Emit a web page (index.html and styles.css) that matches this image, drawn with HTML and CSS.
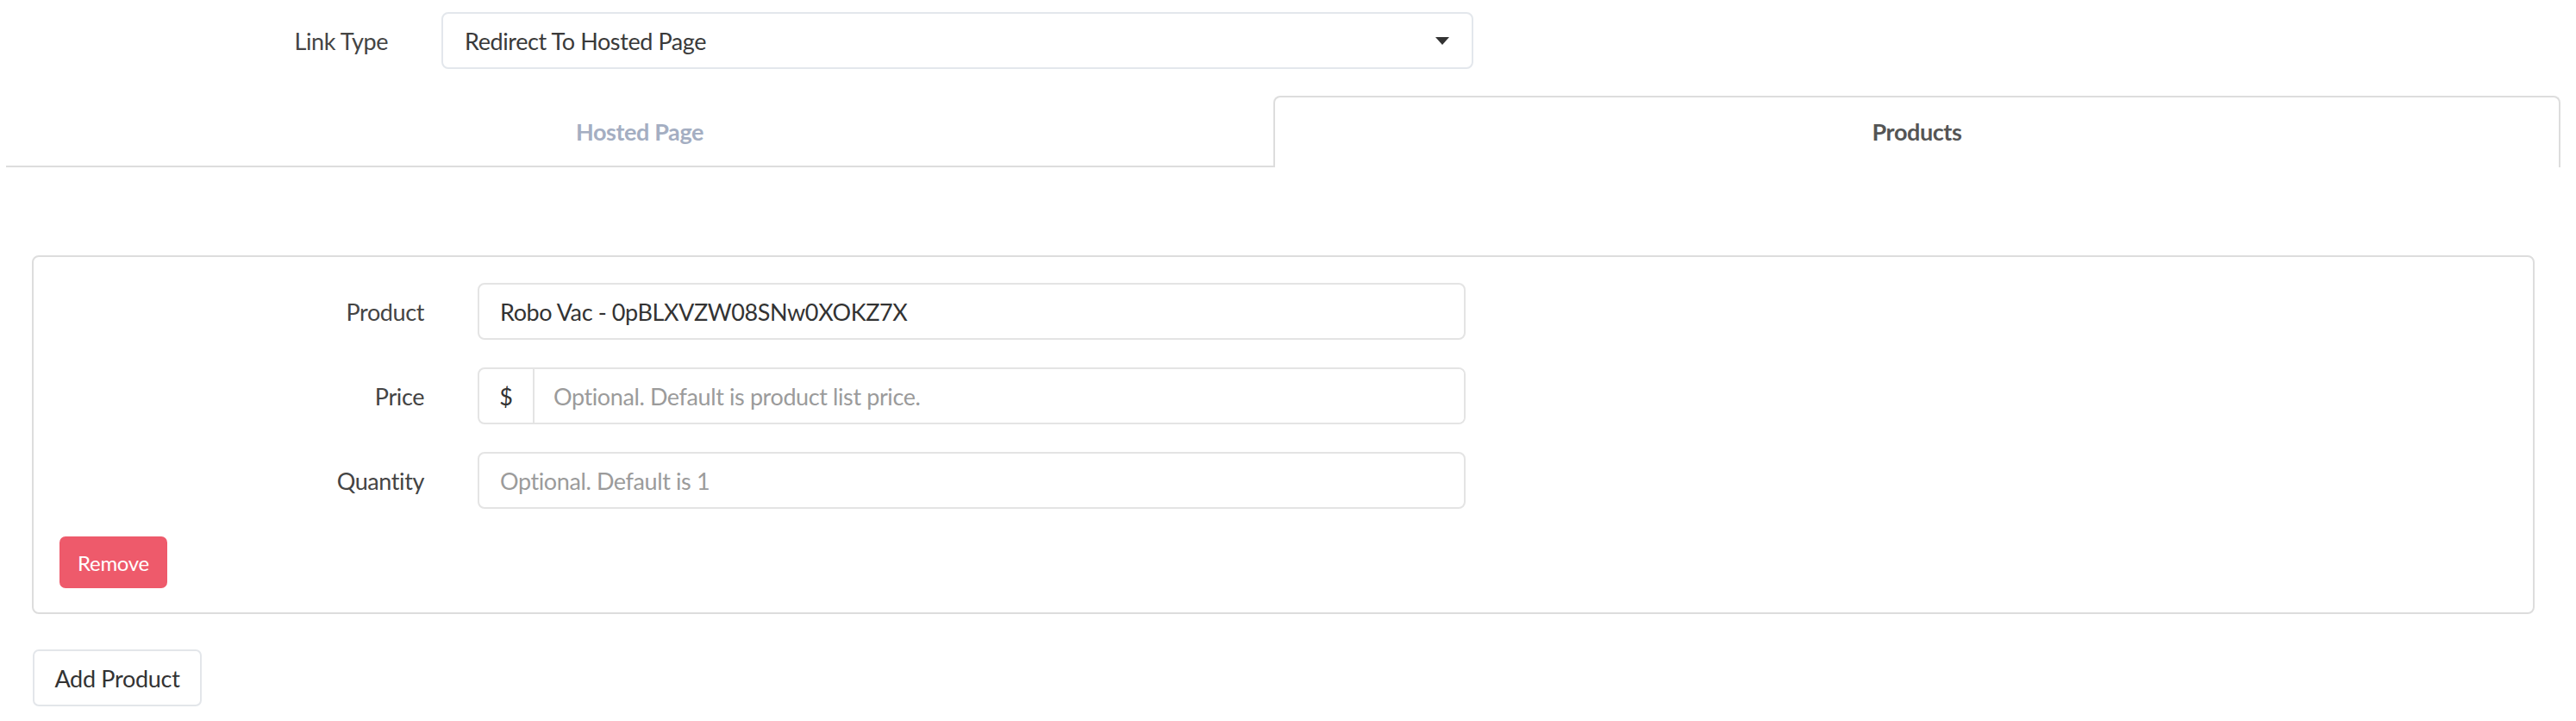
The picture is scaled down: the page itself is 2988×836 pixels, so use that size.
FILE: index.html
```html
<!DOCTYPE html>
<html lang="en">

<head>
    <meta charset="UTF-8">
    <meta name="viewport" content="width=device-width, initial-scale=1.0">
    <title>Payment Link</title>
    <link rel="stylesheet" href="styles.css">
</head>

<body>
    <div class="page">

        <!-- Link type -->
        <div class="form-row top-row">
            <label class="field-label">Link Type</label>
            <div class="select-box">
                <span>Redirect To Hosted Page</span>
                <span class="caret"></span>
            </div>
        </div>

        <!-- Tabs -->
        <div class="tabs">
            <div class="tab">Hosted Page</div>
            <div class="tab active">Products</div>
        </div>

        <!-- Product card -->
        <div class="product-card">
            <div class="form-row">
                <label class="field-label">Product</label>
                <input class="field" type="text" value="Robo Vac - 0pBLXVZW08SNw0XOKZ7X">
            </div>
            <div class="form-row">
                <label class="field-label">Price</label>
                <div class="field input-group">
                    <span class="addon">$</span>
                    <input type="text" placeholder="Optional. Default is product list price.">
                </div>
            </div>
            <div class="form-row">
                <label class="field-label">Quantity</label>
                <input class="field" type="text" placeholder="Optional. Default is 1">
            </div>
            <button class="btn btn-remove">Remove</button>
        </div>

        <button class="btn btn-add">Add Product</button>
    </div>
</body>

</html>
```

FILE: styles.css
```css
body {
    margin: 0;
    background: #ffffff;
    font-family: "Source Sans Pro", Lato, "Noto Sans", sans-serif;
    font-size: 27px;
    letter-spacing: -0.4px;
    color: #444444;
}

.page {
    padding-top: 14px;
}

.form-row {
    display: flex;
    align-items: center;
    gap: 62px;
    margin-bottom: 32px;
}

.field-label {
    width: 423px;
    text-align: right;
    color: #444444;
}

.top-row {
    padding-left: 27px;
    margin-bottom: 0;
}

/* select */
.select-box {
    box-sizing: border-box;
    width: 1197px;
    height: 66px;
    border: 2px solid #e3e7ec;
    border-radius: 8px;
    padding: 0 24px 0 25px;
    display: flex;
    align-items: center;
    justify-content: space-between;
    color: #3a3a3a;
}

.caret {
    width: 0;
    height: 0;
    border-left: 8px solid transparent;
    border-right: 8px solid transparent;
    border-top: 9px solid #333333;
    margin-right: 2px;
}

/* tabs */
.tabs {
    display: grid;
    grid-template-columns: 1470px 1493px;
    margin: 31px 0 0 7px;
}

.tab {
    box-sizing: border-box;
    height: 83px;
    display: flex;
    align-items: center;
    justify-content: center;
    font-weight: bold;
    color: #a4aec2;
    border-top: 2px solid transparent;
    border-bottom: 2px solid #dddddd;
}

.tab.active {
    color: #555555;
    border: 2px solid #dddddd;
    border-bottom: none;
    border-radius: 8px 8px 0 0;
    padding-bottom: 2px;
}

/* card */
.product-card {
    box-sizing: border-box;
    width: 2903px;
    margin: 102px 0 0 37px;
    border: 2px solid #dddddd;
    border-radius: 8px;
    padding: 30px 30px 28px 30px;
}

.field {
    box-sizing: border-box;
    width: 1146px;
    height: 66px;
    border: 2px solid #e4e4e4;
    border-radius: 8px;
    padding: 0 24px;
    font-family: inherit;
    font-size: 27px;
    letter-spacing: -0.4px;
    color: #333333;
    background: #ffffff;
    outline: none;
}

.field::placeholder,
.input-group input::placeholder {
    color: #9b9b9b;
}

.input-group {
    display: flex;
    padding: 0;
    overflow: hidden;
}

.addon {
    width: 62px;
    display: flex;
    align-items: center;
    justify-content: center;
    border-right: 2px solid #e4e4e4;
    color: #333333;
}

.input-group input {
    flex: 1;
    border: none;
    outline: none;
    padding: 0 22px;
    font-family: inherit;
    font-size: 27px;
    letter-spacing: -0.4px;
    color: #333333;
}

/* buttons */
.btn {
    box-sizing: border-box;
    font-family: inherit;
    letter-spacing: -0.3px;
    cursor: pointer;
    border-radius: 7px;
}

.btn-remove {
    width: 125px;
    height: 60px;
    border: none;
    background: #ee5a6b;
    color: #ffffff;
    font-size: 24px;
}

.btn-add {
    display: block;
    width: 196px;
    height: 66px;
    margin: 41px 0 0 38px;
    border: 2px solid #e3e6ea;
    background: #ffffff;
    color: #333333;
    font-size: 27px;
}
```
